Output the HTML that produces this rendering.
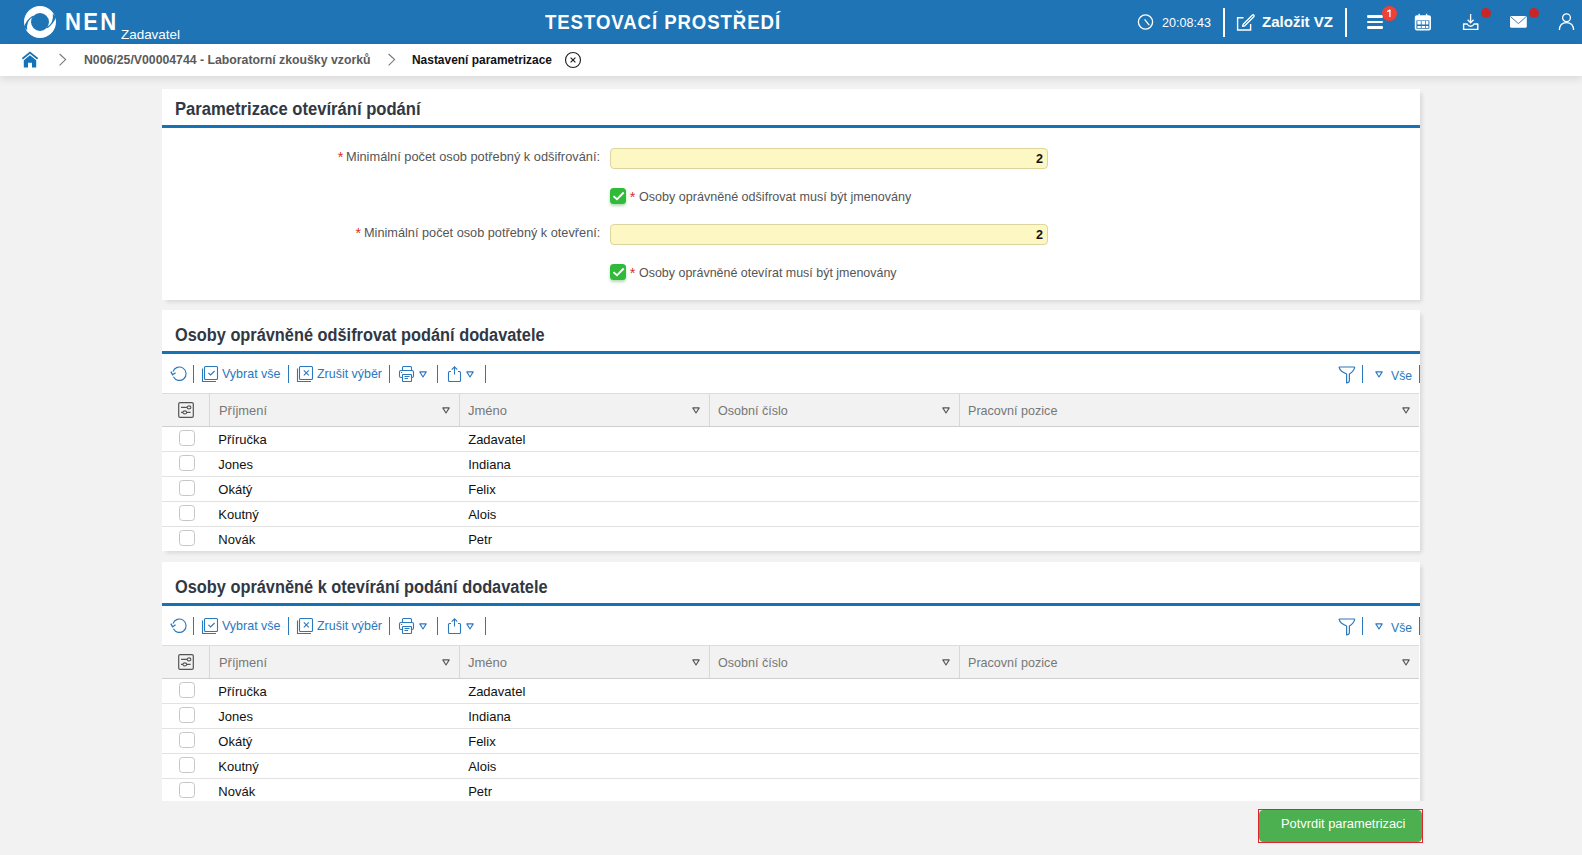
<!DOCTYPE html>
<html><head><meta charset="utf-8">
<style>
*{margin:0;padding:0}
html,body{width:1582px;height:855px;overflow:hidden;background:#f2f2f2;font-family:"Liberation Sans",sans-serif;position:relative}
.t{position:absolute;white-space:nowrap;line-height:1}
</style></head><body>
<div style="position:absolute;left:0px;top:0px;width:1582px;height:44px;background:#1f74b5"></div>
<svg style="position:absolute;left:22px;top:4px;overflow:visible;" width="36" height="36" viewBox="0 0 36 36"><circle cx="18" cy="18" r="12.5" fill="none" stroke="#fff" stroke-width="7"/><path d="M10.6 11.8 Q4.4 16 1.9 23.0 L5.2 26.3 Q4.0 16.4 11.6 12.8 Z" fill="#1f74b5"/><path d="M25.4 24.2 Q31.6 20 34.1 13.0 L30.8 9.7 Q32.0 19.6 24.4 23.2 Z" fill="#1f74b5"/></svg>
<svg style="position:absolute;left:1137px;top:13px;overflow:visible;" width="17" height="17" viewBox="0 0 17 17"><circle cx="8.5" cy="9" r="7.1" fill="none" stroke="#fff" stroke-width="1.3"/><path d="M7.6 6.4 L12.2 12.2" stroke="#fff" stroke-width="1.3" fill="none"/></svg>
<div style="position:absolute;left:1223px;top:8px;width:2px;height:29px;background:#fff"></div>
<svg style="position:absolute;left:1236px;top:13px;overflow:visible;" width="19" height="19" viewBox="0 0 19 19"><path d="M7.5 4.8 H1.6 V17 H14.6 V11" fill="none" stroke="#fff" stroke-width="1.4"/><path d="M7.2 11.2 L16.2 2.2 Q17.2 1.4 17.9 2.2 Q18.6 3 17.8 3.8 L8.8 12.8 L6.6 13.4 Z" fill="none" stroke="#fff" stroke-width="1.3" stroke-linejoin="round"/></svg>
<div style="position:absolute;left:1345px;top:8px;width:2px;height:29px;background:#fff"></div>
<div style="position:absolute;left:1367px;top:15.2px;width:16px;height:2.4px;background:#fff;border-radius:1.2px"></div>
<div style="position:absolute;left:1367px;top:21px;width:16px;height:2.4px;background:#fff;border-radius:1.2px"></div>
<div style="position:absolute;left:1367px;top:26.4px;width:16px;height:2.4px;background:#fff;border-radius:1.2px"></div>
<div style="position:absolute;left:1382px;top:6px;width:15px;height:15px;background:#ef4136;border-radius:50%"></div>
<svg style="position:absolute;left:1382px;top:6px;overflow:visible;" width="15" height="15" viewBox="0 0 15 15"><path d="M7.9 4 V11" stroke="#fff" stroke-width="1.35"/><path d="M5.2 5.6 L8.3 3.9" stroke="#fff" stroke-width="1.2"/></svg>
<svg style="position:absolute;left:1414px;top:13px;overflow:visible;" width="18" height="18" viewBox="0 0 18 18"><rect x="1.6" y="3" width="14.6" height="13.6" rx="1.4" fill="none" stroke="#fff" stroke-width="1.6"/><rect x="1.6" y="3" width="14.6" height="4.4" fill="#fff"/><path d="M5.2 0.8 V4 M12.6 0.8 V4" stroke="#fff" stroke-width="1.4"/><path d="M3.4 9.8 H14.4" stroke="#fff" stroke-width="3.4" stroke-dasharray="3.4 0.8"/><path d="M3.4 14 H14.4" stroke="#fff" stroke-width="2" stroke-dasharray="3.4 0.8"/></svg>
<svg style="position:absolute;left:1462px;top:13px;overflow:visible;" width="18" height="18" viewBox="0 0 18 18"><path d="M8.6 1 V9.5 M5.6 6.8 L8.6 9.8 L11.6 6.8" fill="none" stroke="#fff" stroke-width="1.3"/><path d="M1.6 11 H5.2 Q6.4 13.2 8.6 13.2 Q10.8 13.2 12 11 H15.8 V16.4 H1.6 Z" fill="none" stroke="#fff" stroke-width="1.4" stroke-linejoin="round"/></svg>
<div style="position:absolute;left:1481px;top:8px;width:10px;height:10px;background:#c62828;border-radius:50%"></div>
<svg style="position:absolute;left:1509px;top:15px;overflow:visible;" width="19" height="14" viewBox="0 0 19 14"><rect x="1" y="1" width="16.8" height="11.8" rx="1.6" fill="#fff"/><path d="M2 2 L9.4 8.6 L16.8 2" fill="none" stroke="#1f74b5" stroke-width="0.9"/></svg>
<div style="position:absolute;left:1529px;top:8px;width:10px;height:10px;background:#c62828;border-radius:50%"></div>
<svg style="position:absolute;left:1558px;top:13px;overflow:visible;" width="18" height="18" viewBox="0 0 18 18"><circle cx="8.5" cy="4.8" r="3.9" fill="none" stroke="#fff" stroke-width="1.3"/><path d="M1.4 17 Q1.6 9.6 8.5 9.6 Q15.4 9.6 15.6 17" fill="none" stroke="#fff" stroke-width="1.3"/></svg>
<div style="position:absolute;left:0px;top:44px;width:1582px;height:32px;background:#fff;box-shadow:0 3px 8px rgba(0,0,0,.10)"></div>
<svg style="position:absolute;left:21px;top:51px;overflow:visible;" width="18" height="18" viewBox="0 0 18 18"><path d="M1.4 7.8 L9 1.6 L16.6 7.8" fill="none" stroke="#1672b6" stroke-width="1.8" stroke-linejoin="miter"/><path d="M2.8 9.2 L9 4.2 L15.2 9.2 V16.6 H11 V11.8 H7 V16.6 H2.8 Z" fill="#1672b6"/></svg>
<svg style="position:absolute;left:58px;top:53px;overflow:visible;" width="10" height="14" viewBox="0 0 10 14"><path d="M1.6 1 L7.6 6.6 L1.6 12.4" fill="none" stroke="#777" stroke-width="1.1"/></svg>
<svg style="position:absolute;left:387px;top:53px;overflow:visible;" width="10" height="14" viewBox="0 0 10 14"><path d="M1.6 1 L7.6 6.6 L1.6 12.4" fill="none" stroke="#777" stroke-width="1.1"/></svg>
<svg style="position:absolute;left:563.5px;top:51px;overflow:visible;" width="18" height="18" viewBox="0 0 18 18"><circle cx="9" cy="9" r="7.5" fill="none" stroke="#222" stroke-width="1.15"/><path d="M6.6 6.6 L11.4 11.4 M11.4 6.6 L6.6 11.4" stroke="#222" stroke-width="1.2"/></svg>
<div style="position:absolute;left:162px;top:89px;width:1258px;height:211px;background:#fff;box-shadow:3px 3px 4px -1px rgba(0,0,0,.11)"></div>
<div style="position:absolute;left:162px;top:125px;width:1258px;height:3px;background:#1672b6"></div>
<div style="position:absolute;left:610px;top:148px;width:438px;height:21px;background:#fdf7c3;border:1px solid #ddd59e;border-radius:4px;box-sizing:border-box"></div>
<div style="position:absolute;left:610px;top:188px;width:16px;height:16px;background:#2fba3a;border-radius:3.5px;box-shadow:0 2px 3px rgba(40,150,40,.35)"></div>
<svg style="position:absolute;left:610px;top:188px;overflow:visible;" width="16" height="16" viewBox="0 0 16 16"><path d="M3.4 8.1 L7 11.3 L13.7 4.5" fill="none" stroke="#fff" stroke-width="1.9" stroke-linejoin="miter"/></svg>
<div style="position:absolute;left:610px;top:224px;width:438px;height:21px;background:#fdf7c3;border:1px solid #ddd59e;border-radius:4px;box-sizing:border-box"></div>
<div style="position:absolute;left:610px;top:264px;width:16px;height:16px;background:#2fba3a;border-radius:3.5px;box-shadow:0 2px 3px rgba(40,150,40,.35)"></div>
<svg style="position:absolute;left:610px;top:264px;overflow:visible;" width="16" height="16" viewBox="0 0 16 16"><path d="M3.4 8.1 L7 11.3 L13.7 4.5" fill="none" stroke="#fff" stroke-width="1.9" stroke-linejoin="miter"/></svg>
<div style="position:absolute;left:162px;top:310px;width:1258px;height:241px;background:#fff;box-shadow:3px 3px 4px -1px rgba(0,0,0,.11)"></div>
<div style="position:absolute;left:162px;top:351px;width:1258px;height:3px;background:#1672b6"></div>
<svg style="position:absolute;left:170px;top:366px;overflow:visible;" width="18" height="18" viewBox="0 0 18 18"><path d="M3.4 10.8 A6.7 6.7 0 1 0 3.0 5.6" fill="none" stroke="#2a78bd" stroke-width="1.15"/><path d="M0.8 5.6 L2.6 8.8 L5.6 6.8" fill="none" stroke="#2a78bd" stroke-width="1.3"/></svg>
<div style="position:absolute;left:193px;top:365px;width:1.2px;height:17.5px;background:#2a78bd"></div>
<svg style="position:absolute;left:201px;top:365px;overflow:visible;" width="18" height="18" viewBox="0 0 18 18"><rect x="3.5" y="1.5" width="13" height="13" rx="1" fill="none" stroke="#2a78bd" stroke-width="1.1"/><path d="M1.5 3.5 V16.5 H15" fill="none" stroke="#2a78bd" stroke-width="1.1"/><path d="M7.4 7.8 L9.6 10 L13.6 6" fill="none" stroke="#2a78bd" stroke-width="1.1"/></svg>
<div style="position:absolute;left:288px;top:365px;width:1.2px;height:17.5px;background:#2a78bd"></div>
<svg style="position:absolute;left:296px;top:365px;overflow:visible;" width="18" height="18" viewBox="0 0 18 18"><rect x="3.5" y="1.5" width="13" height="13" rx="1" fill="none" stroke="#2a78bd" stroke-width="1.1"/><path d="M1.5 3.5 V16.5 H15" fill="none" stroke="#2a78bd" stroke-width="1.1"/><path d="M7.8 5.4 L12.8 10.4 M12.8 5.4 L7.8 10.4" fill="none" stroke="#2a78bd" stroke-width="1.1"/></svg>
<div style="position:absolute;left:389px;top:365px;width:1.2px;height:17.5px;background:#2a78bd"></div>
<svg style="position:absolute;left:397px;top:366px;overflow:visible;" width="18" height="18" viewBox="0 0 18 18"><path d="M5.5 4.5 V1.5 Q5.5 0.5 6.5 0.5 H13.5 Q14.5 0.5 14.5 1.5 V4.5" fill="none" stroke="#2a78bd" stroke-width="1.1"/><rect x="2.5" y="4.5" width="14" height="7" rx="1.5" fill="none" stroke="#2a78bd" stroke-width="1.1"/><rect x="5.5" y="8.5" width="9" height="7" rx="0.6" fill="#fff" stroke="#2a78bd" stroke-width="1.1"/><path d="M7.5 10.5 H12.5 M7.5 12.5 H11" stroke="#2a78bd" stroke-width="1"/><path d="M4 6.5 H5.2" stroke="#2a78bd" stroke-width="1"/></svg>
<svg style="position:absolute;left:419px;top:371px;overflow:visible;" width="8" height="7" viewBox="0 0 8 7"><path d="M0.8 0.9 H7.2 L4 6 Z" fill="none" stroke="#2a78bd" stroke-width="1.1" stroke-linejoin="round"/></svg>
<div style="position:absolute;left:437px;top:365px;width:1.2px;height:17.5px;background:#2a78bd"></div>
<svg style="position:absolute;left:447px;top:366px;overflow:visible;" width="16" height="18" viewBox="0 0 16 18"><path d="M4 5.5 H2.5 Q1.5 5.5 1.5 6.5 V14.5 Q1.5 15.5 2.5 15.5 H12.5 Q13.5 15.5 13.5 14.5 V6.5 Q13.5 5.5 12.5 5.5 H11" fill="none" stroke="#2a78bd" stroke-width="1.1"/><path d="M7.5 8.4 V0.9 M4.7 3.6 L7.5 0.8 L10.3 3.6" fill="none" stroke="#2a78bd" stroke-width="1.1"/></svg>
<svg style="position:absolute;left:466px;top:371px;overflow:visible;" width="8" height="7" viewBox="0 0 8 7"><path d="M0.8 0.9 H7.2 L4 6 Z" fill="none" stroke="#2a78bd" stroke-width="1.1" stroke-linejoin="round"/></svg>
<div style="position:absolute;left:485px;top:365px;width:1.2px;height:17.5px;background:#2a78bd"></div>
<svg style="position:absolute;left:1338px;top:366px;overflow:visible;" width="18" height="18" viewBox="0 0 18 18"><path d="M1.2 1.6 Q1 1 1.8 1 H16 Q16.8 1 16.6 1.6 Q15.8 5.2 11.4 8 V14.4 Q11.4 15.6 10.2 16.4 L8.6 17 V8 Q2 5.2 1.2 1.6 Z" fill="none" stroke="#2a78bd" stroke-width="1.2" stroke-linejoin="round"/></svg>
<div style="position:absolute;left:1362px;top:365px;width:1.2px;height:17.5px;background:#2a78bd"></div>
<svg style="position:absolute;left:1375px;top:371px;overflow:visible;" width="8" height="7" viewBox="0 0 8 7"><path d="M0.8 0.9 H7.2 L4 6 Z" fill="none" stroke="#2a78bd" stroke-width="1.1" stroke-linejoin="round"/></svg>
<div style="position:absolute;left:1419px;top:365px;width:1.2px;height:17.5px;background:#2a78bd"></div>
<div style="position:absolute;left:162px;top:393px;width:1257px;height:34px;background:#f2f2f2;border-top:1px solid #dcdcdc;border-bottom:1.5px solid #cfcfcf;box-sizing:border-box"></div>
<div style="position:absolute;left:209px;top:394px;width:1px;height:32px;background:#d8d8d8"></div>
<div style="position:absolute;left:459px;top:394px;width:1px;height:32px;background:#d8d8d8"></div>
<div style="position:absolute;left:709px;top:394px;width:1px;height:32px;background:#d8d8d8"></div>
<div style="position:absolute;left:959px;top:394px;width:1px;height:32px;background:#d8d8d8"></div>
<svg style="position:absolute;left:177px;top:401px;overflow:visible;" width="18" height="18" viewBox="0 0 18 18"><rect x="1.7" y="1.7" width="14.6" height="14.6" rx="1.4" fill="none" stroke="#555" stroke-width="1.2"/><path d="M4 6.4 H13.6 M4 11.4 H13.6" stroke="#555" stroke-width="1.1"/><ellipse cx="12" cy="6.4" rx="1.9" ry="1.5" fill="#f2f2f2" stroke="#555" stroke-width="1.1"/><ellipse cx="7.8" cy="11.4" rx="1.9" ry="1.5" fill="#f2f2f2" stroke="#555" stroke-width="1.1"/></svg>
<svg style="position:absolute;left:442.3px;top:407px;overflow:visible;" width="8" height="7" viewBox="0 0 8 7"><path d="M0.8 0.9 H7.2 L4 6 Z" fill="none" stroke="#555" stroke-width="1.1" stroke-linejoin="round"/></svg>
<svg style="position:absolute;left:692.3px;top:407px;overflow:visible;" width="8" height="7" viewBox="0 0 8 7"><path d="M0.8 0.9 H7.2 L4 6 Z" fill="none" stroke="#555" stroke-width="1.1" stroke-linejoin="round"/></svg>
<svg style="position:absolute;left:942.3px;top:407px;overflow:visible;" width="8" height="7" viewBox="0 0 8 7"><path d="M0.8 0.9 H7.2 L4 6 Z" fill="none" stroke="#555" stroke-width="1.1" stroke-linejoin="round"/></svg>
<svg style="position:absolute;left:1402.3px;top:407px;overflow:visible;" width="8" height="7" viewBox="0 0 8 7"><path d="M0.8 0.9 H7.2 L4 6 Z" fill="none" stroke="#555" stroke-width="1.1" stroke-linejoin="round"/></svg>
<div style="position:absolute;left:162px;top:451px;width:1257px;height:1px;background:#e2e2e2"></div>
<div style="position:absolute;left:179px;top:430px;width:16px;height:16px;background:#fff;border:1px solid #c6c6c6;border-radius:3.5px;box-sizing:border-box"></div>
<div style="position:absolute;left:162px;top:476px;width:1257px;height:1px;background:#e2e2e2"></div>
<div style="position:absolute;left:179px;top:455px;width:16px;height:16px;background:#fff;border:1px solid #c6c6c6;border-radius:3.5px;box-sizing:border-box"></div>
<div style="position:absolute;left:162px;top:501px;width:1257px;height:1px;background:#e2e2e2"></div>
<div style="position:absolute;left:179px;top:480px;width:16px;height:16px;background:#fff;border:1px solid #c6c6c6;border-radius:3.5px;box-sizing:border-box"></div>
<div style="position:absolute;left:162px;top:526px;width:1257px;height:1px;background:#e2e2e2"></div>
<div style="position:absolute;left:179px;top:505px;width:16px;height:16px;background:#fff;border:1px solid #c6c6c6;border-radius:3.5px;box-sizing:border-box"></div>
<div style="position:absolute;left:179px;top:530px;width:16px;height:16px;background:#fff;border:1px solid #c6c6c6;border-radius:3.5px;box-sizing:border-box"></div>
<div style="position:absolute;left:0;top:0;width:1582px;height:801px;overflow:hidden">
<div style="position:absolute;left:162px;top:562px;width:1258px;height:241px;background:#fff;box-shadow:3px 3px 4px -1px rgba(0,0,0,.11)"></div>
<div style="position:absolute;left:162px;top:603px;width:1258px;height:3px;background:#1672b6"></div>
<svg style="position:absolute;left:170px;top:618px;overflow:visible;" width="18" height="18" viewBox="0 0 18 18"><path d="M3.4 10.8 A6.7 6.7 0 1 0 3.0 5.6" fill="none" stroke="#2a78bd" stroke-width="1.15"/><path d="M0.8 5.6 L2.6 8.8 L5.6 6.8" fill="none" stroke="#2a78bd" stroke-width="1.3"/></svg>
<div style="position:absolute;left:193px;top:617px;width:1.2px;height:17.5px;background:#2a78bd"></div>
<svg style="position:absolute;left:201px;top:617px;overflow:visible;" width="18" height="18" viewBox="0 0 18 18"><rect x="3.5" y="1.5" width="13" height="13" rx="1" fill="none" stroke="#2a78bd" stroke-width="1.1"/><path d="M1.5 3.5 V16.5 H15" fill="none" stroke="#2a78bd" stroke-width="1.1"/><path d="M7.4 7.8 L9.6 10 L13.6 6" fill="none" stroke="#2a78bd" stroke-width="1.1"/></svg>
<div style="position:absolute;left:288px;top:617px;width:1.2px;height:17.5px;background:#2a78bd"></div>
<svg style="position:absolute;left:296px;top:617px;overflow:visible;" width="18" height="18" viewBox="0 0 18 18"><rect x="3.5" y="1.5" width="13" height="13" rx="1" fill="none" stroke="#2a78bd" stroke-width="1.1"/><path d="M1.5 3.5 V16.5 H15" fill="none" stroke="#2a78bd" stroke-width="1.1"/><path d="M7.8 5.4 L12.8 10.4 M12.8 5.4 L7.8 10.4" fill="none" stroke="#2a78bd" stroke-width="1.1"/></svg>
<div style="position:absolute;left:389px;top:617px;width:1.2px;height:17.5px;background:#2a78bd"></div>
<svg style="position:absolute;left:397px;top:618px;overflow:visible;" width="18" height="18" viewBox="0 0 18 18"><path d="M5.5 4.5 V1.5 Q5.5 0.5 6.5 0.5 H13.5 Q14.5 0.5 14.5 1.5 V4.5" fill="none" stroke="#2a78bd" stroke-width="1.1"/><rect x="2.5" y="4.5" width="14" height="7" rx="1.5" fill="none" stroke="#2a78bd" stroke-width="1.1"/><rect x="5.5" y="8.5" width="9" height="7" rx="0.6" fill="#fff" stroke="#2a78bd" stroke-width="1.1"/><path d="M7.5 10.5 H12.5 M7.5 12.5 H11" stroke="#2a78bd" stroke-width="1"/><path d="M4 6.5 H5.2" stroke="#2a78bd" stroke-width="1"/></svg>
<svg style="position:absolute;left:419px;top:623px;overflow:visible;" width="8" height="7" viewBox="0 0 8 7"><path d="M0.8 0.9 H7.2 L4 6 Z" fill="none" stroke="#2a78bd" stroke-width="1.1" stroke-linejoin="round"/></svg>
<div style="position:absolute;left:437px;top:617px;width:1.2px;height:17.5px;background:#2a78bd"></div>
<svg style="position:absolute;left:447px;top:618px;overflow:visible;" width="16" height="18" viewBox="0 0 16 18"><path d="M4 5.5 H2.5 Q1.5 5.5 1.5 6.5 V14.5 Q1.5 15.5 2.5 15.5 H12.5 Q13.5 15.5 13.5 14.5 V6.5 Q13.5 5.5 12.5 5.5 H11" fill="none" stroke="#2a78bd" stroke-width="1.1"/><path d="M7.5 8.4 V0.9 M4.7 3.6 L7.5 0.8 L10.3 3.6" fill="none" stroke="#2a78bd" stroke-width="1.1"/></svg>
<svg style="position:absolute;left:466px;top:623px;overflow:visible;" width="8" height="7" viewBox="0 0 8 7"><path d="M0.8 0.9 H7.2 L4 6 Z" fill="none" stroke="#2a78bd" stroke-width="1.1" stroke-linejoin="round"/></svg>
<div style="position:absolute;left:485px;top:617px;width:1.2px;height:17.5px;background:#2a78bd"></div>
<svg style="position:absolute;left:1338px;top:618px;overflow:visible;" width="18" height="18" viewBox="0 0 18 18"><path d="M1.2 1.6 Q1 1 1.8 1 H16 Q16.8 1 16.6 1.6 Q15.8 5.2 11.4 8 V14.4 Q11.4 15.6 10.2 16.4 L8.6 17 V8 Q2 5.2 1.2 1.6 Z" fill="none" stroke="#2a78bd" stroke-width="1.2" stroke-linejoin="round"/></svg>
<div style="position:absolute;left:1362px;top:617px;width:1.2px;height:17.5px;background:#2a78bd"></div>
<svg style="position:absolute;left:1375px;top:623px;overflow:visible;" width="8" height="7" viewBox="0 0 8 7"><path d="M0.8 0.9 H7.2 L4 6 Z" fill="none" stroke="#2a78bd" stroke-width="1.1" stroke-linejoin="round"/></svg>
<div style="position:absolute;left:1419px;top:617px;width:1.2px;height:17.5px;background:#2a78bd"></div>
<div style="position:absolute;left:162px;top:645px;width:1257px;height:34px;background:#f2f2f2;border-top:1px solid #dcdcdc;border-bottom:1.5px solid #cfcfcf;box-sizing:border-box"></div>
<div style="position:absolute;left:209px;top:646px;width:1px;height:32px;background:#d8d8d8"></div>
<div style="position:absolute;left:459px;top:646px;width:1px;height:32px;background:#d8d8d8"></div>
<div style="position:absolute;left:709px;top:646px;width:1px;height:32px;background:#d8d8d8"></div>
<div style="position:absolute;left:959px;top:646px;width:1px;height:32px;background:#d8d8d8"></div>
<svg style="position:absolute;left:177px;top:653px;overflow:visible;" width="18" height="18" viewBox="0 0 18 18"><rect x="1.7" y="1.7" width="14.6" height="14.6" rx="1.4" fill="none" stroke="#555" stroke-width="1.2"/><path d="M4 6.4 H13.6 M4 11.4 H13.6" stroke="#555" stroke-width="1.1"/><ellipse cx="12" cy="6.4" rx="1.9" ry="1.5" fill="#f2f2f2" stroke="#555" stroke-width="1.1"/><ellipse cx="7.8" cy="11.4" rx="1.9" ry="1.5" fill="#f2f2f2" stroke="#555" stroke-width="1.1"/></svg>
<svg style="position:absolute;left:442.3px;top:659px;overflow:visible;" width="8" height="7" viewBox="0 0 8 7"><path d="M0.8 0.9 H7.2 L4 6 Z" fill="none" stroke="#555" stroke-width="1.1" stroke-linejoin="round"/></svg>
<svg style="position:absolute;left:692.3px;top:659px;overflow:visible;" width="8" height="7" viewBox="0 0 8 7"><path d="M0.8 0.9 H7.2 L4 6 Z" fill="none" stroke="#555" stroke-width="1.1" stroke-linejoin="round"/></svg>
<svg style="position:absolute;left:942.3px;top:659px;overflow:visible;" width="8" height="7" viewBox="0 0 8 7"><path d="M0.8 0.9 H7.2 L4 6 Z" fill="none" stroke="#555" stroke-width="1.1" stroke-linejoin="round"/></svg>
<svg style="position:absolute;left:1402.3px;top:659px;overflow:visible;" width="8" height="7" viewBox="0 0 8 7"><path d="M0.8 0.9 H7.2 L4 6 Z" fill="none" stroke="#555" stroke-width="1.1" stroke-linejoin="round"/></svg>
<div style="position:absolute;left:162px;top:703px;width:1257px;height:1px;background:#e2e2e2"></div>
<div style="position:absolute;left:179px;top:682px;width:16px;height:16px;background:#fff;border:1px solid #c6c6c6;border-radius:3.5px;box-sizing:border-box"></div>
<div style="position:absolute;left:162px;top:728px;width:1257px;height:1px;background:#e2e2e2"></div>
<div style="position:absolute;left:179px;top:707px;width:16px;height:16px;background:#fff;border:1px solid #c6c6c6;border-radius:3.5px;box-sizing:border-box"></div>
<div style="position:absolute;left:162px;top:753px;width:1257px;height:1px;background:#e2e2e2"></div>
<div style="position:absolute;left:179px;top:732px;width:16px;height:16px;background:#fff;border:1px solid #c6c6c6;border-radius:3.5px;box-sizing:border-box"></div>
<div style="position:absolute;left:162px;top:778px;width:1257px;height:1px;background:#e2e2e2"></div>
<div style="position:absolute;left:179px;top:757px;width:16px;height:16px;background:#fff;border:1px solid #c6c6c6;border-radius:3.5px;box-sizing:border-box"></div>
<div style="position:absolute;left:179px;top:782px;width:16px;height:16px;background:#fff;border:1px solid #c6c6c6;border-radius:3.5px;box-sizing:border-box"></div>
</div>
<div style="position:absolute;left:1258px;top:809px;width:165px;height:34px;border:1px solid #e0242f;box-sizing:border-box"></div>
<div style="position:absolute;left:1259px;top:810px;width:163px;height:32px;background:#4caf50;border-radius:4.5px"></div>
<span id="t0" class="t" style="left:65px;top:9.68px;font-size:24px;font-weight:bold;color:#fff;letter-spacing:2.5px;transform:scaleX(0.9197);transform-origin:0 0">NEN</span>
<span id="t1" class="t" style="left:120.7px;top:28.37px;font-size:13.5px;font-weight:normal;color:#fff;transform:scaleX(0.9950);transform-origin:0 0">Zadavatel</span>
<span id="t2" class="t" style="left:545px;top:12.07px;font-size:20px;font-weight:bold;color:#fff;letter-spacing:1px;transform:scaleX(0.9297);transform-origin:0 0">TESTOVACÍ PROSTŘEDÍ</span>
<span id="t3" class="t" style="left:1161.9px;top:15.60px;font-size:13px;font-weight:normal;color:#fff;transform:scaleX(0.9682);transform-origin:0 0">20:08:43</span>
<span id="t4" class="t" style="left:1261.7px;top:14.20px;font-size:15px;font-weight:bold;color:#fff;transform:scaleX(1.0022);transform-origin:0 0">Založit VZ</span>
<span id="t5" class="t" style="left:83.6px;top:52.70px;font-size:13px;font-weight:bold;color:#5a5a5a;transform:scaleX(0.9440);transform-origin:0 0">N006/25/V00004744 - Laboratorní zkoušky vzorků</span>
<span id="t6" class="t" style="left:411.5px;top:52.70px;font-size:13px;font-weight:bold;color:#111;transform:scaleX(0.9181);transform-origin:0 0">Nastavení parametrizace</span>
<span id="t7" class="t" style="left:174.6px;top:100.16px;font-size:18px;font-weight:bold;color:#313844;transform:scaleX(0.9229);transform-origin:0 0">Parametrizace otevírání podání</span>
<span id="t8" class="t" style="left:346.00px;top:149.70px;font-size:13px;font-weight:normal;color:#555;transform:scaleX(0.9846);transform-origin:0 0">Minimální počet osob potřebný k odšifrování:</span>
<span id="t9" class="t" style="left:1036.00px;top:151.80px;font-size:13px;font-weight:bold;color:#111;transform:scaleX(0.9676);transform-origin:0 0">2</span>
<span id="t10" class="t" style="left:337.8px;top:149.63px;font-size:14.5px;font-weight:normal;color:#d32f2f">*</span>
<span id="t11" class="t" style="left:629.8px;top:189.53px;font-size:14.5px;font-weight:normal;color:#d32f2f">*</span>
<span id="t12" class="t" style="left:638.6px;top:189.80px;font-size:13px;font-weight:normal;color:#555;transform:scaleX(0.9659);transform-origin:0 0">Osoby oprávněné odšifrovat musí být jmenovány</span>
<span id="t13" class="t" style="left:363.70px;top:225.70px;font-size:13px;font-weight:normal;color:#555;transform:scaleX(0.9790);transform-origin:0 0">Minimální počet osob potřebný k otevření:</span>
<span id="t14" class="t" style="left:1036.00px;top:227.80px;font-size:13px;font-weight:bold;color:#111;transform:scaleX(0.9676);transform-origin:0 0">2</span>
<span id="t15" class="t" style="left:355.6px;top:225.53px;font-size:14.5px;font-weight:normal;color:#d32f2f">*</span>
<span id="t16" class="t" style="left:629.8px;top:265.53px;font-size:14.5px;font-weight:normal;color:#d32f2f">*</span>
<span id="t17" class="t" style="left:638.6px;top:265.80px;font-size:13px;font-weight:normal;color:#555;transform:scaleX(0.9583);transform-origin:0 0">Osoby oprávněné otevírat musí být jmenovány</span>
<span id="t18" class="t" style="left:174.6px;top:326.36px;font-size:18px;font-weight:bold;color:#313844;transform:scaleX(0.9077);transform-origin:0 0">Osoby oprávněné odšifrovat podání dodavatele</span>
<span id="t19" class="t" style="left:222.3px;top:366.60px;font-size:13px;font-weight:normal;color:#2a78bd;transform:scaleX(0.9600);transform-origin:0 0">Vybrat vše</span>
<span id="t20" class="t" style="left:316.9px;top:366.60px;font-size:13px;font-weight:normal;color:#2a78bd;transform:scaleX(0.9572);transform-origin:0 0">Zrušit výběr</span>
<span id="t21" class="t" style="left:1391px;top:368.70px;font-size:13px;font-weight:normal;color:#2a78bd;transform:scaleX(0.9372);transform-origin:0 0">Vše</span>
<span id="t22" class="t" style="left:218.5px;top:404.00px;font-size:13px;font-weight:normal;color:#777;transform:scaleX(0.9916);transform-origin:0 0">Příjmení</span>
<span id="t23" class="t" style="left:468.2px;top:404.00px;font-size:13px;font-weight:normal;color:#777;transform:scaleX(0.9992);transform-origin:0 0">Jméno</span>
<span id="t24" class="t" style="left:718.2px;top:404.00px;font-size:13px;font-weight:normal;color:#777;transform:scaleX(0.9645);transform-origin:0 0">Osobní číslo</span>
<span id="t25" class="t" style="left:967.9px;top:404.00px;font-size:13px;font-weight:normal;color:#777;transform:scaleX(0.9665);transform-origin:0 0">Pracovní pozice</span>
<span id="t26" class="t" style="left:218.3px;top:432.80px;font-size:13px;font-weight:normal;color:#111">Příručka</span>
<span id="t27" class="t" style="left:468.2px;top:432.80px;font-size:13px;font-weight:normal;color:#111">Zadavatel</span>
<span id="t28" class="t" style="left:218.3px;top:457.80px;font-size:13px;font-weight:normal;color:#111">Jones</span>
<span id="t29" class="t" style="left:468.2px;top:457.80px;font-size:13px;font-weight:normal;color:#111">Indiana</span>
<span id="t30" class="t" style="left:218.3px;top:482.80px;font-size:13px;font-weight:normal;color:#111">Okátý</span>
<span id="t31" class="t" style="left:468.2px;top:482.80px;font-size:13px;font-weight:normal;color:#111">Felix</span>
<span id="t32" class="t" style="left:218.3px;top:507.80px;font-size:13px;font-weight:normal;color:#111">Koutný</span>
<span id="t33" class="t" style="left:468.2px;top:507.80px;font-size:13px;font-weight:normal;color:#111">Alois</span>
<span id="t34" class="t" style="left:218.3px;top:532.80px;font-size:13px;font-weight:normal;color:#111">Novák</span>
<span id="t35" class="t" style="left:468.2px;top:532.80px;font-size:13px;font-weight:normal;color:#111">Petr</span>
<span id="t36" class="t" style="left:174.6px;top:578.36px;font-size:18px;font-weight:bold;color:#313844;transform:scaleX(0.9085);transform-origin:0 0">Osoby oprávněné k otevírání podání dodavatele</span>
<span id="t37" class="t" style="left:222.3px;top:618.60px;font-size:13px;font-weight:normal;color:#2a78bd;transform:scaleX(0.9600);transform-origin:0 0">Vybrat vše</span>
<span id="t38" class="t" style="left:316.9px;top:618.60px;font-size:13px;font-weight:normal;color:#2a78bd;transform:scaleX(0.9572);transform-origin:0 0">Zrušit výběr</span>
<span id="t39" class="t" style="left:1391px;top:620.70px;font-size:13px;font-weight:normal;color:#2a78bd;transform:scaleX(0.9372);transform-origin:0 0">Vše</span>
<span id="t40" class="t" style="left:218.5px;top:656.00px;font-size:13px;font-weight:normal;color:#777;transform:scaleX(0.9916);transform-origin:0 0">Příjmení</span>
<span id="t41" class="t" style="left:468.2px;top:656.00px;font-size:13px;font-weight:normal;color:#777;transform:scaleX(0.9992);transform-origin:0 0">Jméno</span>
<span id="t42" class="t" style="left:718.2px;top:656.00px;font-size:13px;font-weight:normal;color:#777;transform:scaleX(0.9645);transform-origin:0 0">Osobní číslo</span>
<span id="t43" class="t" style="left:967.9px;top:656.00px;font-size:13px;font-weight:normal;color:#777;transform:scaleX(0.9665);transform-origin:0 0">Pracovní pozice</span>
<span id="t44" class="t" style="left:218.3px;top:684.80px;font-size:13px;font-weight:normal;color:#111">Příručka</span>
<span id="t45" class="t" style="left:468.2px;top:684.80px;font-size:13px;font-weight:normal;color:#111">Zadavatel</span>
<span id="t46" class="t" style="left:218.3px;top:709.80px;font-size:13px;font-weight:normal;color:#111">Jones</span>
<span id="t47" class="t" style="left:468.2px;top:709.80px;font-size:13px;font-weight:normal;color:#111">Indiana</span>
<span id="t48" class="t" style="left:218.3px;top:734.80px;font-size:13px;font-weight:normal;color:#111">Okátý</span>
<span id="t49" class="t" style="left:468.2px;top:734.80px;font-size:13px;font-weight:normal;color:#111">Felix</span>
<span id="t50" class="t" style="left:218.3px;top:759.80px;font-size:13px;font-weight:normal;color:#111">Koutný</span>
<span id="t51" class="t" style="left:468.2px;top:759.80px;font-size:13px;font-weight:normal;color:#111">Alois</span>
<span id="t52" class="t" style="left:218.3px;top:784.80px;font-size:13px;font-weight:normal;color:#111">Novák</span>
<span id="t53" class="t" style="left:468.2px;top:784.80px;font-size:13px;font-weight:normal;color:#111">Petr</span>
<span id="t54" class="t" style="left:1280.9px;top:818.24px;font-size:12px;font-weight:normal;color:#fff;transform:scaleX(1.0720);transform-origin:0 0">Potvrdit parametrizaci</span>
</body></html>
